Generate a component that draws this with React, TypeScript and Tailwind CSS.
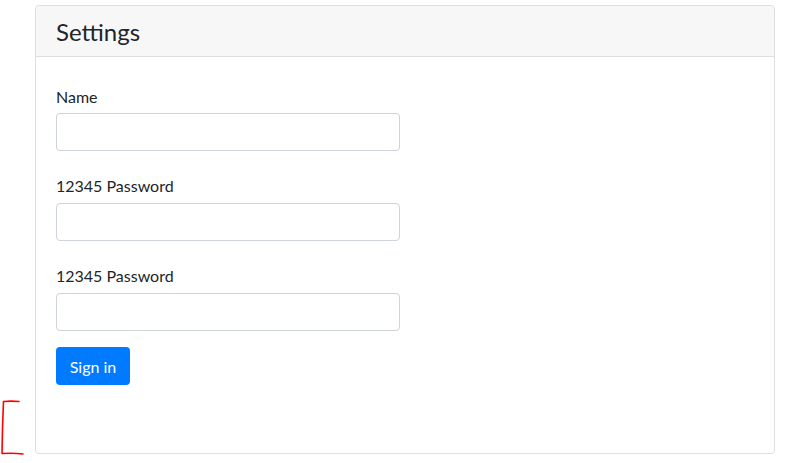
import React from "react";

export default function App() {
  return (
    <div className="relative w-[785px] h-[463px] bg-white text-[#212529] overflow-hidden" style={{ fontFamily: "Lato, 'Open Sans', sans-serif" }}>
      <div className="pt-[5px] pl-[35px]">
        <div className="w-[740px] h-[449px] border border-[#dfdfdf] rounded-[4px] flex flex-col">
          <div className="bg-[#f7f7f7] border-b border-[#dfdfdf] rounded-t-[4px] px-5 pt-[13px] pb-[11px]">
            <h3 className="text-[24px] leading-[26px] font-normal">Settings</h3>
          </div>
          <form className="px-5 pt-5 flex flex-col">
            <div className="mb-4 flex flex-col">
              <label className="text-[16px] leading-6 pt-[8px] mb-[4px]">Name</label>
              <input className="w-[344px] h-[38px] border border-[#ced4da] rounded-[4px] px-3 outline-none" />
            </div>
            <div className="mb-4 flex flex-col">
              <label className="text-[16px] leading-6 pt-[7px] mb-[5px]">12345 Password</label>
              <input type="password" className="w-[344px] h-[38px] border border-[#ced4da] rounded-[4px] px-3 outline-none" />
            </div>
            <div className="mb-4 flex flex-col">
              <label className="text-[16px] leading-6 pt-[7px] mb-[5px]">12345 Password</label>
              <input type="password" className="w-[344px] h-[38px] border border-[#ced4da] rounded-[4px] px-3 outline-none" />
            </div>
            <div>
              <button type="button" className="h-[38px] w-[74px] pt-[2px] bg-[#007bff] text-white text-[16px] rounded-[4px]">Sign in</button>
            </div>
          </form>
        </div>
      </div>
      <svg className="absolute left-0 top-[398px]" width="28" height="60" viewBox="0 0 28 60">
        <path d="M19 3.5 C14 3, 8 3, 3.5 3.5 L2.5 30 L2 55.5 C9 55, 16 55, 23 56" fill="none" stroke="#ff0000" strokeWidth="1.6" strokeLinecap="round" strokeLinejoin="round" />
      </svg>
    </div>
  );
}
